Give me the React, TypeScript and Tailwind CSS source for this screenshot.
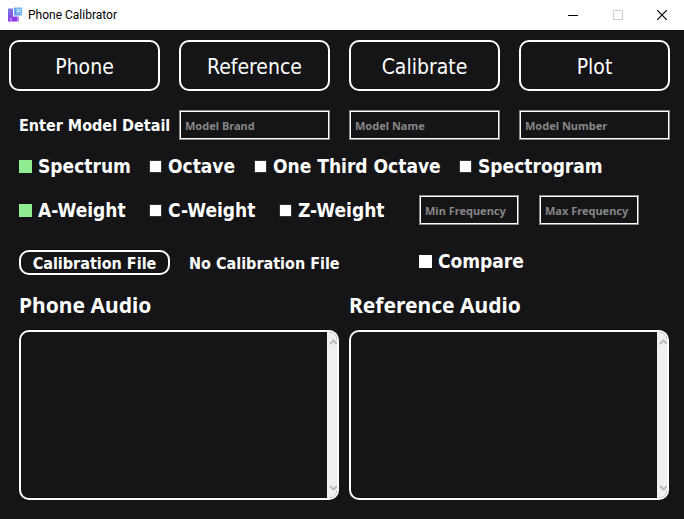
import { useState } from "react";

const TABS = ["Phone", "Reference", "Calibrate", "Plot"];

function Field({ label, className = "" }: { label: string; className?: string }) {
  return (
    <input
      type="text"
      aria-label={label}
      placeholder={label}
      className={`h-[30px] min-w-0 border-2 border-white bg-transparent px-1 font-['Noto_Sans',sans-serif] text-[11px] font-bold text-white outline outline-1 -outline-offset-1 outline-[#8c8c8c] placeholder:text-[#868686] ${className}`}
    />
  );
}

function Check({ label, checked = false, className = "" }: { label: string; checked?: boolean; className?: string }) {
  const [on, setOn] = useState(checked);
  return (
    <label className={`flex h-6 items-center gap-1.5 text-[19px] leading-6 font-bold whitespace-nowrap ${className}`}>
      <input
        type="checkbox"
        checked={on}
        onChange={() => setOn(!on)}
        className="size-[13px] shrink-0 appearance-none border border-[#333333] bg-white checked:border-[#90ee90] checked:bg-[#90ee90]"
      />
      {label}
    </label>
  );
}

function Chevron({ down = false }: { down?: boolean }) {
  return (
    <svg viewBox="0 0 10 8" className="h-2 w-2.5" fill="none" stroke="#bdbdbd" strokeWidth="2">
      <path d={down ? "M3 2 L6.500 5.500 L10 2" : "M3 6 L6.500 2.500 L10 6"} />
    </svg>
  );
}

function AudioPanel({ title }: { title: string }) {
  return (
    <section className="min-w-0">
      <h2 className="font-['Noto_Sans',sans-serif] text-[21px] leading-7 font-bold whitespace-nowrap">{title}</h2>
      <div className="mt-[11px] flex h-[170px] justify-end overflow-hidden rounded-[10px] border-2 border-white">
        <div className="flex w-[10px] flex-col justify-between bg-[#f0f0f0] py-1.5">
          <Chevron />
          <Chevron down />
        </div>
      </div>
    </section>
  );
}

export default function App() {
  return (
    <div className="flex min-h-screen flex-col bg-[#151517] font-['DejaVu_Sans_Condensed','DejaVu_Sans',sans-serif] text-white">
      <header className="flex h-[30px] items-center bg-white pl-2 text-black">
        <svg viewBox="0 0 16 16" className="size-4">
          <defs>
            <linearGradient id="body" x1="0" y1="0" x2="0.400" y2="1">
              <stop offset="0" stopColor="#7187df" />
              <stop offset="1" stopColor="#9234ee" />
            </linearGradient>
            <linearGradient id="bubble" x1="1" y1="0" x2="0" y2="1">
              <stop offset="0" stopColor="#74c4f3" />
              <stop offset="1" stopColor="#668ff0" />
            </linearGradient>
          </defs>
          <path d="M0 1.500h5v8h4v5H0z" fill="url(#body)" />
          <path d="M9 9.500h2v5H9z" fill="#b98cf2" />
          <path d="M6 .5h8v8H6z" fill="url(#bubble)" />
          <path d="M8.500 2.500h4M8 4.500h5M9 6.500h1M12 6.500h1M10.500 2v3" stroke="#c5e8ff" fill="none" />
          <path d="M3 11v3" stroke="#d8bcff" fill="none" />
        </svg>
        <span className="ml-1 font-['Roboto',sans-serif] text-[12px] leading-4">Phone Calibrator</span>
        <div className="ml-auto flex">
          <button aria-label="Minimize" className="flex h-7 w-[46px] items-center justify-center">
            <svg viewBox="0 0 10 10" className="size-[10px]"><path d="M0 5.500h10" stroke="black" /></svg>
          </button>
          <button aria-label="Maximize" disabled className="flex h-7 w-[44px] items-center justify-center">
            <svg viewBox="0 0 10 10" className="size-[10px]"><path d="M.5 .5h9v9h-9z" stroke="#cccccc" fill="none" /></svg>
          </button>
          <button aria-label="Close" className="flex h-7 w-[44px] items-center justify-center">
            <svg viewBox="0 0 10 10" className="size-[10px]"><path d="M0 0l10 10M10 0L0 10" stroke="black" strokeWidth="1.200" /></svg>
          </button>
        </div>
      </header>

      <main className="pt-[10px] pr-[14px] pl-[9px]">
        <nav className="grid grid-cols-4 gap-[19px]">
          {TABS.map((t) => (
            <button key={t} className="h-[51px] rounded-[10px] border-2 border-white pt-0.5 text-[21px] leading-7">
              {t}
            </button>
          ))}
        </nav>

        <div className="mt-[19px] grid grid-cols-4 items-center gap-[19px]">
          <span className="pt-0.5 pl-[10px] text-[16px] leading-6 font-bold whitespace-nowrap">Enter Model Detail</span>
          <Field label="Model Brand" />
          <Field label="Model Name" />
          <Field label="Model Number" />
        </div>

        <div className="mt-[14px] flex pl-[10px]">
          <Check label="Spectrum" checked className="w-[130px]" />
          <Check label="Octave" className="w-[105px]" />
          <Check label="One Third Octave" className="w-[205px]" />
          <Check label="Spectrogram" />
        </div>

        <div className="mt-[17px] flex items-center pl-[10px]">
          <Check label="A-Weight" checked className="w-[130px]" />
          <Check label="C-Weight" className="w-[130px]" />
          <Check label="Z-Weight" className="w-[140px]" />
          <Field label="Min Frequency" className="w-[100px]" />
          <Field label="Max Frequency" className="ml-5 w-[100px]" />
        </div>

        <div className="mt-6 flex h-[26px] items-end pl-[10px]">
          <button className="h-[25px] w-[151px] rounded-[10px] border-2 border-white pt-0.5 text-[16px] leading-5 font-bold whitespace-nowrap">
            Calibration File
          </button>
          <span className="ml-[19px] h-[25px] w-[230px] pt-0.5 text-[16px] leading-6 font-bold whitespace-nowrap">No Calibration File</span>
          <Check label="Compare" className="self-start [&>input]:border-white" />
        </div>

        <div className="mt-4 grid grid-cols-2 gap-[10px] pr-px pl-[10px]">
          <AudioPanel title="Phone Audio" />
          <AudioPanel title="Reference Audio" />
        </div>
      </main>
    </div>
  );
}
